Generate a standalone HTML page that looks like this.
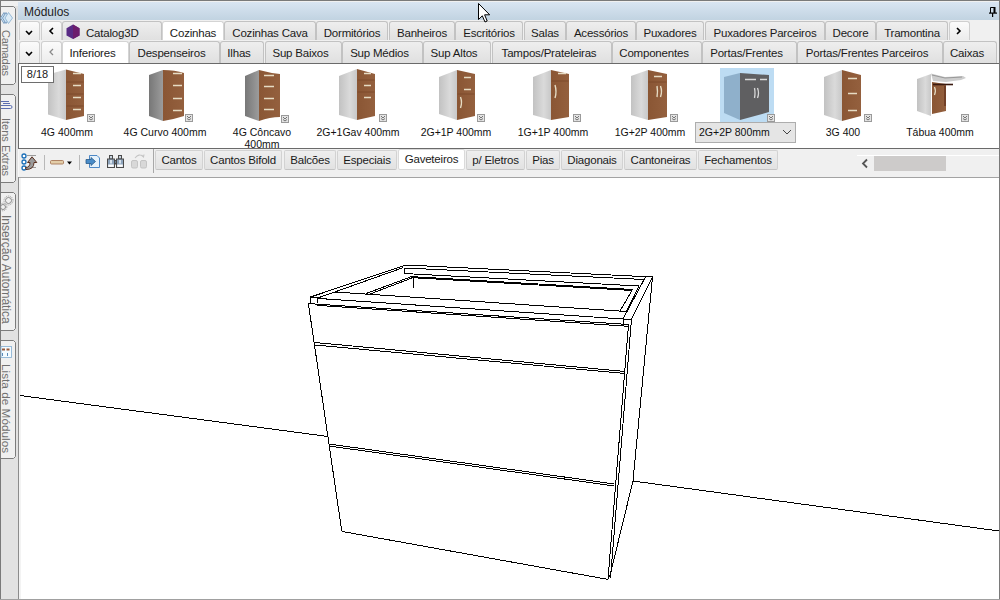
<!DOCTYPE html>
<html><head><meta charset="utf-8">
<style>
*{box-sizing:border-box}
html,body{margin:0;padding:0}
body{width:1000px;height:600px;overflow:hidden;position:relative;background:#f0f0f0;font-family:"Liberation Sans",sans-serif;font-size:11px;color:#1a1a1a}
.a{position:absolute}
.bl{position:absolute;background:#7a7a7a}
/* sidebar */
.stab{position:absolute;left:1px;width:15px;background:#f0f0f0;border:1px solid #7c7c7c;border-left:none;border-radius:0 2px 2px 0}
.stxt{position:absolute;white-space:nowrap;transform-origin:0 0;transform:rotate(90deg);font-size:11.5px;line-height:13px;color:#707070}
/* title */
.title{position:absolute;left:18px;top:2px;width:981px;height:18px;background:linear-gradient(#d9e5f2,#c1d3e1)}
/* tabs */
.tab{position:absolute;height:19px;border:1px solid #c2c2c2;border-bottom:none;border-radius:3px 3px 0 0;background:linear-gradient(#eeeeee,#e0e0e0);text-align:center;line-height:18px;padding-top:2px;white-space:nowrap;font-size:11.5px;letter-spacing:-0.2px}
.tab.sel{background:#fff;border-color:#d4d4d4}
.r1{top:21px}
.r2{top:41px;height:22px;line-height:21px;padding-top:1px;padding-right:6px}
.btn{position:absolute;height:19px;width:21px;border:1px solid #cfcfcf;border-bottom:none;border-radius:3px 3px 0 0;background:linear-gradient(#fbfbfb,#ececec)}
/* items */
.panel{position:absolute;left:18px;top:63px;width:981px;height:86px;background:#fff;border:1px solid #6a6a6a;border-right:none}
.cap{position:absolute;text-align:center;width:110px;white-space:nowrap;font-size:10.5px;line-height:13px;color:#111}
.mini{position:absolute;width:9px;height:9px;background:#e0e0e0;border:1px solid #b8b8b8}
/* toolbar */
.ttab{position:absolute;top:150px;height:20px;background:linear-gradient(#eeeeee,#e2e2e2);border:1px solid #d2d2d2;border-bottom:1px solid #c4c4c4;border-radius:2px;text-align:center;line-height:18px;white-space:nowrap;font-size:11.5px;letter-spacing:-0.2px}
.ttab.sel{background:#fff;border-color:#dadada}
</style></head><body>
<!-- outer borders -->
<div class="bl" style="left:0;top:0;width:1000px;height:1px"></div>
<div class="bl" style="left:0;top:0;width:1px;height:600px"></div>
<div class="bl" style="left:999px;top:0;width:1px;height:600px"></div>
<div class="bl" style="left:0;top:599px;width:1000px;height:1px;background:#a0a0a0"></div>

<!-- sidebar background -->
<div class="a" style="left:1px;top:1px;width:17px;height:598px;background:#e2e2e2"></div>
<div class="a" style="left:1px;top:1px;width:17px;height:5px;background:#f0f0f0"></div>


<svg class="a" style="left:0;top:0" width="18" height="470"><path d="M1 6.5 H13.5 L15.5 8.5 V82.5 L13.5 84.5 H1M1 94.5 H13.5 L15.5 96.5 V180.5 L13.5 182.5 H1M1 192.5 H13.5 L15.5 194.5 V328.5 L13.5 330.5 H1M1 340.5 H13.5 L15.5 342.5 V456.5 L13.5 458.5 H1" fill="#f0f0f0" stroke="#7c7c7c" stroke-width="1"/></svg>
<svg class="a" style="left:0;top:0" width="18" height="380" viewBox="0 0 18 380">
<!-- layers -->
<g fill="#cfe3f2" stroke="#6f95bb" stroke-width="0.9">
<path d="M0.5 18 L4 12.5 L7.5 18 L4 23.5 Z"/>
<path d="M2.5 18 L6 12.5 L9.5 18 L6 23.5 Z"/>
<path d="M5 18 L8.5 12.5 L12.5 18 L8.5 23.5 Z" fill="#dcebf6" stroke="#8fb4d4"/>
</g>
<!-- paperclip -->
<path d="M1 101.5 H9 M1 105.5 H10.5 Q12 105.5 12 107 Q12 108.5 10.5 108.5 H1 M3 103.5 H10" fill="none" stroke="#4a5fa8" stroke-width="0.9"/>
<!-- gears -->
<g fill="none" stroke="#8a8a8a" stroke-width="1">
<circle cx="8.5" cy="200.5" r="3"/>
<circle cx="3" cy="207" r="2.5"/>
</g>
<g fill="none" stroke="#9a9a9a" stroke-width="1" stroke-dasharray="1 1">
<circle cx="8.5" cy="200.5" r="4.5"/>
<circle cx="3" cy="207" r="3.8"/>
</g>
<!-- list -->
<rect x="1" y="346.5" width="10.5" height="11" fill="#f4fbff" stroke="#8fb4d4" stroke-width="0.9"/>
<path d="M2 349.5 h3 M6.5 349.5 h3" stroke="#9a5a3a" stroke-width="2"/>
<path d="M2.5 353 v3 M7.5 353 v3" stroke="#5a8ab8" stroke-width="1"/>
</svg>
<div class="stxt" style="top:30px;left:12px;font-size:11px;letter-spacing:-0.2px">Camadas</div>
<div class="stxt" style="top:118px;left:12px;font-size:11px">Itens Extras</div>
<div class="stxt" style="top:215px;left:12px;font-size:12px">Inserção Automática</div>
<div class="stxt" style="top:364px;left:12px;font-size:11.8px">Lista de Módulos</div>

<!-- title -->
<div class="title"></div>
<div class="a" style="left:24px;top:4px;font-size:12px;line-height:16px;color:#1e1e1e">Módulos</div>
<svg class="a" style="left:989px;top:7px" width="8" height="10" viewBox="0 0 8 10">
<path d="M1.5 6 V0.5 H5.5" fill="none" stroke="#000" stroke-width="1"/>
<rect x="4.5" y="0" width="2" height="6" fill="#000"/>
<rect x="0" y="5.5" width="8" height="1.2" fill="#000"/>
<rect x="3" y="6" width="1.2" height="4" fill="#000"/>
</svg>

<!-- row 1 -->
<div class="btn r1" style="left:19px"></div>
<div class="btn r1" style="left:41px"></div>
<div class="tab r1" style="left:62px;width:100px;text-align:left;padding-left:23px">Catalog3D</div>
<div class="tab r1 sel" style="left:162px;width:62px">Cozinhas</div>
<div class="tab r1" style="left:224px;width:92px">Cozinhas Cava</div>
<div class="tab r1" style="left:316px;width:72px">Dormitórios</div>
<div class="tab r1" style="left:389px;width:66px">Banheiros</div>
<div class="tab r1" style="left:455px;width:68px">Escritórios</div>
<div class="tab r1" style="left:524px;width:42px">Salas</div>
<div class="tab r1" style="left:566px;width:70px">Acessórios</div>
<div class="tab r1" style="left:636px;width:68px">Puxadores</div>
<div class="tab r1" style="left:705px;width:120px">Puxadores Parceiros</div>
<div class="tab r1" style="left:825px;width:51px">Decore</div>
<div class="tab r1" style="left:876px;width:72px">Tramontina</div>
<div class="btn r1" style="left:949px"></div>

<!-- row 2 -->
<div class="btn r2" style="left:19px;height:22px"></div>
<div class="btn r2" style="left:41px;height:22px"></div>
<div class="tab r2 sel" style="left:62px;width:67px">Inferiores</div>
<div class="tab r2" style="left:129px;width:91px">Despenseiros</div>
<div class="tab r2" style="left:220px;width:44px">Ilhas</div>
<div class="tab r2" style="left:265px;width:77px">Sup Baixos</div>
<div class="tab r2" style="left:342px;width:81px">Sup Médios</div>
<div class="tab r2" style="left:423px;width:68px">Sup Altos</div>
<div class="tab r2" style="left:492px;width:120px">Tampos/Prateleiras</div>
<div class="tab r2" style="left:612px;width:90px">Componentes</div>
<div class="tab r2" style="left:702px;width:95px">Portas/Frentes</div>
<div class="tab r2" style="left:797px;width:146px">Portas/Frentes Parceiros</div>
<div class="tab r2" style="left:943px;width:54px">Caixas</div>

<!-- button glyphs -->
<svg class="a" style="left:0;top:0" width="1000" height="64">
<g fill="none" stroke="#000" stroke-width="1.6">
<path d="M26 31 L29 34 L32 31"/>
<path d="M53 28 L50 31 L53 34"/>
<path d="M957 28 L960 31 L957 34"/>
<path d="M26 52 L29 55 L32 52"/>
</g>
<path d="M53 49 L50 52 L53 55" fill="none" stroke="#8a8a8a" stroke-width="1.3"/>
<polygon points="73,24.5 79.5,28.2 79.5,35.5 73,39 66.5,35.5 66.5,28.2" fill="#582a84"/>
<polygon points="73,24.5 79.5,28.2 79.5,35.5 73,39" fill="#6c1c6c"/>
</svg>

<!-- items panel -->
<div class="panel"></div>

<!-- items panel content -->
<div class="a" style="left:720px;top:68px;width:54px;height:54px;background:#bddcf3"></div>
<svg class="a" style="left:0;top:60px" width="1000" height="70" viewBox="0 60 1000 70">
<defs>
<linearGradient id="gs" x1="0" x2="1" y1="0" y2="0"><stop offset="0" stop-color="#c2c2c2"/><stop offset="0.6" stop-color="#dadada"/><stop offset="1" stop-color="#c8c8c8"/></linearGradient>
<linearGradient id="gd" x1="0" x2="1" y1="0" y2="0"><stop offset="0" stop-color="#777777"/><stop offset="1" stop-color="#9c9c9c"/></linearGradient>
<linearGradient id="gb" x1="0" x2="1" y1="0" y2="0"><stop offset="0" stop-color="#8a5634"/><stop offset="1" stop-color="#94603e"/></linearGradient>
<g id="mi"><rect x="0.5" y="0.5" width="7" height="7" fill="#e4e4e4" stroke="#9a9a9a"/><path d="M2 2 L4 4 L6 2 M2 4.5 L4 6 L6 4.5" stroke="#555" fill="none" stroke-width="0.8"/></g>
</defs>
<g stroke="#e8d8b8" stroke-width="1.6" stroke-linecap="round" fill="none"></g>
<!-- 1 -->
<polygon points="48,74.5 66,69.5 66,120 48,114.5" fill="url(#gs)"/>
<polygon points="66,69.5 84,74 84,116 66,120" fill="url(#gb)"/>
<path d="M73 73.5h8 M73 85.5h8 M73 97.5h8 M73 109.5h8" stroke="#e6dcc4" stroke-width="1.5"/>
<path d="M66.5 82h17 M66.5 94h17 M66.5 106h17" stroke="#7a4628" stroke-width="0.8"/>
<use href="#mi" x="87" y="114"/>
<!-- 2 -->
<polygon points="149,75 163,70 163,121 149,116" fill="url(#gd)"/>
<path d="M163,70 Q175,70 184,73 L184,116 Q175,119 163,121 Z" fill="url(#gb)"/>
<path d="M173 73.5h9 M173 85.5h9 M173 98.5h9 M173 110.5h9" stroke="#e6dcc4" stroke-width="1.5"/>
<use href="#mi" x="185" y="114"/>
<!-- 3 -->
<polygon points="245,76 259,70 259,121 245,116" fill="url(#gd)"/>
<path d="M259,70 Q270,73 280,74 L280,117 Q270,117 259,121 Z" fill="url(#gb)"/>
<path d="M264 75.5h10 M264 86.5h10 M264 98.5h10 M264 109.5h10" stroke="#e6dcc4" stroke-width="1.5"/>
<use href="#mi" x="281" y="115"/>
<!-- 4 -->
<polygon points="339,76 357,69 357,120 339,115" fill="url(#gs)"/>
<polygon points="357,69 375,74 375,116 357,120" fill="url(#gb)"/>
<path d="M364 73.5h7 M364 85.5h7 M364 97.5h7" stroke="#e6dcc4" stroke-width="1.5"/>
<path d="M357.5 80h17 M357.5 92h17" stroke="#7a4628" stroke-width="0.8"/>
<use href="#mi" x="379" y="114"/>
<!-- 5 -->
<polygon points="439,77 457,70 457,120 439,114" fill="url(#gs)"/>
<polygon points="457,70 475,74 475,116 457,120" fill="url(#gb)"/>
<path d="M464 77.5h7 M464 89.5h7 M460.5 97 q2 5.5 0 11" fill="none" stroke="#e6dcc4" stroke-width="1.4"/>
<path d="M457.5 94h17" stroke="#7a4628" stroke-width="0.8"/>
<use href="#mi" x="477" y="114"/>
<!-- 6 -->
<polygon points="533,77 551,70 551,120 533,115" fill="url(#gs)"/>
<polygon points="551,70 569,74 569,117 551,120" fill="url(#gb)"/>
<path d="M558 73.5h8 M555 85 q2 6.5 0 13" fill="none" stroke="#e6dcc4" stroke-width="1.4"/>
<path d="M551.5 81h17" stroke="#7a4628" stroke-width="0.8"/>
<use href="#mi" x="573" y="114"/>
<!-- 7 -->
<polygon points="631,76 648,70 648,120 631,115" fill="url(#gs)"/>
<polygon points="648,70 667,74 667,117 648,120" fill="url(#gb)"/>
<path d="M654 76.5h8 M657 86 q1 5.5 0 11 M660.5 86 q2 5.5 0 11" fill="none" stroke="#e6dcc4" stroke-width="1.4"/>
<path d="M648.5 82h18" stroke="#7a4628" stroke-width="0.8"/>
<use href="#mi" x="670" y="114"/>
<!-- 8 -->
<polygon points="724,77 740,73 740,120 724,113" fill="#8fb0cb"/>
<polygon points="740,73 769,75 769,112 740,120" fill="#5f5f61"/>
<path d="M745 79.5h11 M760 79.5h7 M754.5 88 q1 5 0 10 M757.5 88 q2 5 0 10" fill="none" stroke="#d8d8d8" stroke-width="1.3"/>
<use href="#mi" x="767" y="114"/>
<!-- 9 -->
<polygon points="824,77 842,70 842,121 824,115" fill="url(#gs)"/>
<polygon points="842,70 861,75 861,116 842,121" fill="url(#gb)"/>
<path d="M848 78.5h9 M848 93.5h9 M848 110.5h9" stroke="#e6dcc4" stroke-width="1.5"/>
<use href="#mi" x="864" y="114"/>
<!-- 10 -->
<polygon points="917,79 931,74 931,116 917,111" fill="url(#gs)"/>
<polygon points="931,73.5 945,77 963,76 966,78 961,80 946,82 933,81" fill="#cdcdcd"/><path d="M932 75 L945 78 L962 77" fill="none" stroke="#8a8a8a" stroke-width="0.8"/>
<polygon points="932,82 946,84 946,111 932,114" fill="url(#gb)"/>
<path d="M933 84.5h20" stroke="#3a1a10" stroke-width="1.6"/><path d="M945 86 v20" stroke="#5a2a18" stroke-width="1.2"/><path d="M934.5 87 q1.8 4 0 8" fill="none" stroke="#e6dcc4" stroke-width="1.2"/>
<use href="#mi" x="961" y="114"/>
</svg>
<div class="a" style="left:21px;top:66px;width:33px;height:17px;border:1px solid #6e6e6e;background:#fff;font-size:11px;line-height:15px;text-align:center;color:#1a1a1a">8/18</div>
<div class="cap" style="left:12px;top:126px">4G 400mm</div>
<div class="cap" style="left:110px;top:126px">4G Curvo 400mm</div>
<div class="cap" style="left:207px;top:126px;line-height:13px;height:22px;overflow:hidden">4G Côncavo<br><span style="position:relative;top:-1px">400mm</span></div>
<div class="cap" style="left:303px;top:126px">2G+1Gav 400mm</div>
<div class="cap" style="left:401px;top:126px">2G+1P 400mm</div>
<div class="cap" style="left:498px;top:126px">1G+1P 400mm</div>
<div class="cap" style="left:595px;top:126px">1G+2P 400mm</div>
<div class="a" style="left:695px;top:122px;width:101px;height:21px;background:#e5e5e5;border:1px solid #adadad"></div>
<div class="a" style="left:699px;top:125px;font-size:10.5px;line-height:15px;color:#111;white-space:nowrap">2G+2P 800mm</div>
<svg class="a" style="left:782px;top:129px" width="10" height="6"><path d="M1 1 L5 5 L9 1" fill="none" stroke="#444" stroke-width="1"/></svg>
<div class="cap" style="left:788px;top:126px">3G 400</div>
<div class="cap" style="left:885px;top:126px">Tábua 400mm</div>

<!-- toolbar -->
<div class="a" style="left:19px;top:149px;width:980px;height:28px;background:#f0f0f0"></div>
<div class="a" style="left:19px;top:177px;width:980px;height:1px;background:#a3a3a3"></div>
<div class="a" style="left:19px;top:178px;width:980px;height:421px;background:#fff"></div>
<div class="a" style="left:18px;top:149px;width:1px;height:28px;background:#f7f7f7"></div>
<div class="a" style="left:18px;top:177px;width:1px;height:422px;background:#8c8c8c"></div>
<div class="a" style="left:19px;top:178px;width:2px;height:421px;background:#f3f3f3"></div>
<div class="a" style="left:44px;top:155px;width:1px;height:15px;background:#b8b8b8"></div>
<div class="a" style="left:79px;top:155px;width:1px;height:15px;background:#b8b8b8"></div>
<div class="a" style="left:153px;top:149px;width:1px;height:24px;background:#a8a8a8"></div>
<svg class="a" style="left:18px;top:149px" width="140" height="26" viewBox="18 149 140 26">
<!-- icon1 -->
<path d="M27 155.5h9 M27 167.5h9" stroke="#9a9a9a" stroke-width="1"/>
<circle cx="24" cy="156" r="2" fill="#fff" stroke="#1a6fb8" stroke-width="1.3"/>
<circle cx="24" cy="162" r="2" fill="#fff" stroke="#1a6fb8" stroke-width="1.3"/>
<circle cx="24" cy="168" r="2" fill="#fff" stroke="#1a6fb8" stroke-width="1.3"/>
<path d="M25.5 167.5 Q30 167.5 30 162.5 L27.5 162.5 L32 156.8 L36.8 162.5 L34 162.5 Q34 169.5 26 169.5 Z" fill="#9a9a9a" stroke="#5a3020" stroke-width="1"/>
<!-- icon2 -->
<rect x="50.5" y="160.5" width="13" height="3.5" rx="1" fill="#e3cda8" stroke="#a87858" stroke-width="0.9"/>
<path d="M67 161.5 L72 161.5 L69.5 164.5 Z" fill="#000"/>
<!-- icon3 -->
<path d="M89.5 155.5 H97 L99.5 158 V167.5 H89.5 Z" fill="#e6f2fb" stroke="#3b7cc0" stroke-width="0.9"/>
<path d="M86 159.5 H91 V157.5 L95.5 161.5 L91 165.5 V163.5 H86 Z" fill="#4a8cc8" stroke="#2a5a8a" stroke-width="0.8"/>
<!-- icon4 binoculars -->
<g stroke="#4a4a4a" stroke-width="1">
<rect x="109.5" y="155.5" width="3" height="3.5" fill="#c8d4e0"/>
<rect x="118.5" y="155.5" width="3" height="3.5" fill="#c8d4e0"/>
<rect x="107.5" y="159" width="7" height="8.5" fill="#8ea4bc"/>
<rect x="116.5" y="159" width="7" height="8.5" fill="#8ea4bc"/>
<rect x="114.5" y="160.5" width="2" height="3.5" fill="#6a7e94"/>
</g>
<rect x="108.2" y="164.5" width="5.6" height="2.4" fill="#fff"/>
<rect x="117.2" y="164.5" width="5.6" height="2.4" fill="#fff"/>
<rect x="110" y="160" width="2" height="3.5" fill="#d8e2ec"/>
<rect x="119" y="160" width="2" height="3.5" fill="#d8e2ec"/>
<!-- icon5 disabled -->
<rect x="131.5" y="160.5" width="6" height="7.5" rx="1.5" fill="#d8d8d8" stroke="#c4c4c4"/>
<rect x="140.5" y="160.5" width="6" height="7.5" rx="1.5" fill="#d8d8d8" stroke="#c4c4c4"/>
<path d="M135 158 Q139 153 143 156.5 M141.5 155 L143.5 157 L144 154.5" fill="none" stroke="#c4c4c4" stroke-width="1.1"/>
</svg>
<div class="ttab" style="left:155px;width:48px">Cantos</div>
<div class="ttab" style="left:204px;width:78px">Cantos Bifold</div>
<div class="ttab" style="left:284px;width:52px">Balcões</div>
<div class="ttab" style="left:337px;width:60px">Especiais</div>
<div class="ttab sel" style="left:398px;width:67px;top:149px;height:21px;line-height:19px">Gaveteiros</div>
<div class="ttab" style="left:466px;width:59px">p/ Eletros</div>
<div class="ttab" style="left:526px;width:34px">Pias</div>
<div class="ttab" style="left:561px;width:62px">Diagonais</div>
<div class="ttab" style="left:624px;width:73px">Cantoneiras</div>
<div class="ttab" style="left:698px;width:80px">Fechamentos</div>
<div class="a" style="left:857px;top:155px;width:142px;height:1px;background:#fff"></div>
<svg class="a" style="left:860px;top:158px" width="10" height="11"><path d="M7 1.5 L3 5.5 L7 9.5" fill="none" stroke="#555" stroke-width="1.8"/></svg>
<div class="a" style="left:874px;top:156px;width:72px;height:15px;background:#cdcbca"></div>

<!-- viewport drawing -->
<svg class="a" style="left:0;top:0" width="1000" height="600" viewBox="0 0 1000 600">
<path shape-rendering="crispEdges" d="M20 395.5L328 436.5M633 481L999 531M310.5 297L406 265M406 265L652.5 277M652.5 277L631.5 319M317.8 298L403.5 267.5M405 268L644.5 279.5M646 276L623 319M317.5 298.4L623 319M404 268L404 273.5M404 273.5L639 286M411.5 276.6L632.5 289.5M411.5 277.6L632.5 290.5M365.6 293.7L411.5 276.6M370 294L413.3 277.5M335 292L626.5 311.5M639 286L626.5 311M632.5 289.5L620 311M413.3 277.5L413.3 288M310.5 297L317.5 297M317.5 297L317.5 303M310.5 297L310.5 303M623 319L631.5 319M631.5 319L631.5 325M623 319L623 325M308.4 303.6L628.5 324.5M317 305.3L628.5 326.3M308.4 303.6L341.8 531.4M628.5 324.5L608 579.4M631 325L610.5 578M341.8 531.4L608 579.4M652.5 277L633 481M633 481L609.6 577M315 342.5L625 371.5M315 345L625 373.5M329 444L614.4 484M329 446L614.4 486" fill="none" stroke="#000" stroke-width="1"/>
</svg>
<!-- cursor -->
<svg class="a" style="left:477px;top:2px" width="16" height="22" viewBox="-1 -1 16 22">
<path d="M0.5 0.5 L0.5 16.5 L4.3 12.8 L7 19 L9.2 18 L6.6 11.8 L11.7 11.8 Z" fill="#fff" stroke="#000" stroke-width="1" stroke-linejoin="miter"/>
</svg>
</body></html>
